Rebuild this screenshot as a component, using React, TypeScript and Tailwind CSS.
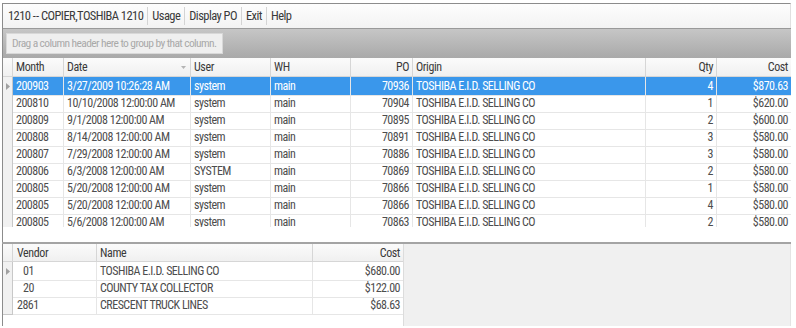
const font = "font-['Roboto_Condensed','Liberation_Sans',sans-serif]"

const rows = [
  ['200903', '3/27/2009 10:26:28 AM', 'system', 'main', '70936', '4', '$870.63'],
  ['200810', '10/10/2008 12:00:00 AM', 'system', 'main', '70904', '1', '$620.00'],
  ['200809', '9/1/2008 12:00:00 AM', 'system', 'main', '70895', '2', '$600.00'],
  ['200808', '8/14/2008 12:00:00 AM', 'system', 'main', '70891', '3', '$580.00'],
  ['200807', '7/29/2008 12:00:00 AM', 'system', 'main', '70886', '3', '$580.00'],
  ['200806', '6/3/2008 12:00:00 AM', 'SYSTEM', 'main', '70869', '2', '$580.00'],
  ['200805', '5/20/2008 12:00:00 AM', 'system', 'main', '70866', '1', '$580.00'],
  ['200805', '5/20/2008 12:00:00 AM', 'system', 'main', '70866', '4', '$580.00'],
  ['200805', '5/6/2008 12:00:00 AM', 'system', 'main', '70863', '2', '$580.00'],
]

const vendors = [
  ['01', 'TOSHIBA E.I.D. SELLING CO', '$680.00'],
  ['20', 'COUNTY TAX COLLECTOR', '$122.00'],
  ['2861', 'CRESCENT TRUCK LINES', '$68.63'],
]

const topCols = 'grid grid-cols-[10px_51px_127px_80px_80px_62px_233px_71px_75px]'
const lowCols = 'grid grid-cols-[10px_84px_216px_90px]'

function Arrow() {
  return (
    <svg width="4" height="7" viewBox="0 0 4 7" className="ml-[3px]">
      <path d="M0 0 L4 3.5 L0 7 Z" fill="#a0a0a0" />
    </svg>
  )
}

function Menu() {
  const items = ['1210 -\u200a- COPIER,TOSHIBA 1210', 'Usage', 'Display PO', 'Exit', 'Help']
  return (
    <div className="flex h-[25px] items-center border-t border-l border-r border-[#8c8c8c] border-r-[#e0e0e0] bg-gradient-to-b from-[#fdfdfd] to-[#f3f3f3] pl-[5px] text-[12.5px] tracking-[-0.55px] text-[#3a3a3a]">
      {items.map((it, i) => (
        <div key={it} className="flex items-center">
          {i > 0 && <div className="mx-[4px] h-[18px] w-px bg-[#d4d4d4]" />}
          <span>{it}</span>
        </div>
      ))}
    </div>
  )
}

function TopGrid() {
  const headers: [string, string][] = [
    ['', ''],
    ['Month', 'justify-start'],
    ['Date', 'justify-between'],
    ['User', 'justify-start'],
    ['WH', 'justify-start'],
    ['PO', 'justify-end'],
    ['Origin', 'justify-start'],
    ['Qty', 'justify-end'],
    ['Cost', 'justify-end'],
  ]
  return (
    <div className="border-l border-[#8c8c8c]">
      <div className="flex h-[30px] items-center border-t border-[#9a9a9a] bg-gradient-to-b from-[#c6c6c6] to-[#a9a9a9] pl-[3px]">
        <div className="flex h-[21px] items-center border border-[#d8d8d8] bg-[#efefef] px-[5px] text-[11.5px] tracking-[-0.6px] text-[#a9a9a9]">
          Drag a column header here to group by that column.
        </div>
      </div>
      <div className="h-[169px] overflow-hidden">
        <div className={`${topCols} h-[19px] border-b border-[#d6d6d6] bg-gradient-to-b from-[#fbfbfb] to-[#f0f0f0] text-[12px] tracking-[-0.4px] text-[#3a3a3a]`}>
          {headers.map(([h, j], i) => (
            <div key={i} className={`flex items-center ${j} border-r border-[#d6d6d6] px-[3px]`}>
              <span>{h}</span>
              {h === 'Date' && (
                <svg width="5" height="3" viewBox="0 0 5 3" className="mr-[1px]">
                  <path d="M0 0 L5 0 L2.5 3 Z" fill="#b4b4b4" />
                </svg>
              )}
            </div>
          ))}
        </div>
        {rows.map((r, i) => {
          const sel = i === 0
          const cell = sel
            ? 'border-r border-[#7fbcf2] bg-[#3a97eb] text-white'
            : 'border-r border-[#e6e6e6] text-[#4d4d4d]'
          return (
            <div key={i} className={`${topCols} h-[17px] text-[12px] tracking-[-0.5px]`}>
              <div className="flex items-center border-r border-b border-[#c8c8c8] bg-[#f1f1f1]">
                {sel && <Arrow />}
              </div>
              <div className={`flex items-center border-b border-[#e6e6e6] pl-[3px] ${cell}`}>{r[0]}</div>
              <div className={`flex items-center border-b border-[#e6e6e6] pl-[3px] ${cell}`}>{r[1]}</div>
              <div className={`flex items-center border-b border-[#e6e6e6] pl-[3px] ${cell}`}>{r[2]}</div>
              <div className={`flex items-center border-b border-[#e6e6e6] pl-[3px] ${cell}`}>{r[3]}</div>
              <div className={`flex items-center justify-end border-b border-[#e6e6e6] pr-[3px] ${cell}`}>{r[4]}</div>
              <div className={`flex items-center border-b border-[#e6e6e6] pl-[3px] ${cell}`}>TOSHIBA E.I.D. SELLING CO</div>
              <div className={`flex items-center justify-end border-b border-[#e6e6e6] pr-[3px] ${cell}`}>{r[5]}</div>
              <div className={`flex items-center justify-end border-b border-[#e6e6e6] pr-[3px] ${cell}`}>{r[6]}</div>
            </div>
          )
        })}
      </div>
    </div>
  )
}

function LowerGrid() {
  return (
    <div className="flex h-[84px] border-t-2 border-[#a4a4a4]">
      <div className="w-[402px] border-l border-r border-l-[#8c8c8c] border-r-[#dcdcdc] bg-white">
        <div className={`${lowCols} h-[18px] border-b border-[#d6d6d6] bg-gradient-to-b from-[#fbfbfb] to-[#f0f0f0] text-[12px] tracking-[-0.4px] text-[#3a3a3a]`}>
          <div className="border-r border-[#d6d6d6]" />
          <div className="flex items-center border-r border-[#d6d6d6] pl-[4px]">Vendor</div>
          <div className="flex items-center border-r border-[#d6d6d6] pl-[3px]">Name</div>
          <div className="flex items-center justify-end pr-[3px]">Cost</div>
        </div>
        {vendors.map((v, i) => (
          <div key={i} className={`${lowCols} h-[17px] text-[12px] tracking-[-0.5px] text-[#4d4d4d]`}>
            <div className="flex items-center border-r border-b border-[#c8c8c8] bg-[#f1f1f1]">
              {i === 0 && <Arrow />}
            </div>
            <div className={`flex items-center border-r border-b border-[#e6e6e6] ${v[0].length > 2 ? 'pl-[4px]' : 'pl-[10px]'}`}>{v[0]}</div>
            <div className="flex items-center border-r border-b border-[#e6e6e6] pl-[3px]">{v[1]}</div>
            <div className="flex items-center justify-end border-b border-[#e6e6e6] pr-[3px]">{v[2]}</div>
          </div>
        ))}
      </div>
      <div className="w-[387px] border-r border-[#e4e4e4] bg-[#f0f0f0]" />
    </div>
  )
}

export default function App() {
  return (
    <div className={`h-[328px] w-[796px] overflow-hidden bg-white ${font}`}>
      <div className="ml-[2px] w-[789px] pt-[3px]">
        <Menu />
        <TopGrid />
        <div className="h-[15px] border-l border-[#8c8c8c]" />
        <LowerGrid />
      </div>
    </div>
  )
}
